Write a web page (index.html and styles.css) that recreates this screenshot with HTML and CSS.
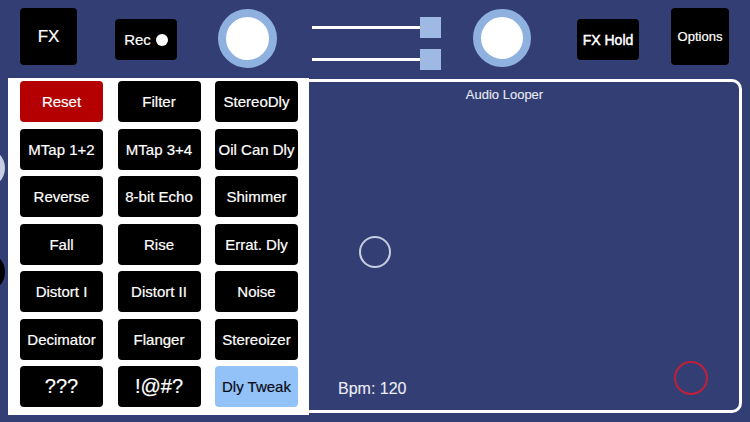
FILE: index.html
```html
<!DOCTYPE html>
<html>
<head>
<meta charset="utf-8">
<link rel="stylesheet" href="styles.css">
</head>
<body>
<div class="edge edge-light"></div>
<div class="edge edge-dark"></div>
<div class="topbar">
  <div class="tbtn fx">FX</div>
  <div class="tbtn rec">Rec <span class="dot"></span></div>
  <div class="knob k1"></div>
  <div class="sliders">
    <div class="srow"><div class="line"></div><div class="thumb"></div></div>
    <div class="srow"><div class="line"></div><div class="thumb"></div></div>
  </div>
  <div class="knob k2"></div>
  <div class="tbtn fxhold">FX Hold</div>
  <div class="tbtn options">Options</div>
</div>
<div class="main">
  <div class="panel">
    <div class="btn red">Reset</div>
    <div class="btn">Filter</div>
    <div class="btn">StereoDly</div>
    <div class="btn">MTap 1+2</div>
    <div class="btn">MTap 3+4</div>
    <div class="btn">Oil Can Dly</div>
    <div class="btn">Reverse</div>
    <div class="btn">8-bit Echo</div>
    <div class="btn">Shimmer</div>
    <div class="btn">Fall</div>
    <div class="btn">Rise</div>
    <div class="btn">Errat. Dly</div>
    <div class="btn">Distort I</div>
    <div class="btn">Distort II</div>
    <div class="btn">Noise</div>
    <div class="btn">Decimator</div>
    <div class="btn">Flanger</div>
    <div class="btn">Stereoizer</div>
    <div class="btn big">???</div>
    <div class="btn big">!@#?</div>
    <div class="btn blue">Dly Tweak</div>
  </div>
  <div class="looper">
    <div class="title">Audio Looper</div>
    <div class="bpm">Bpm: 120</div>
    <div class="ring ring-gray"></div>
    <div class="ring ring-red"></div>
  </div>
</div>
</body>
</html>
```
FILE: styles.css
```css
html, body {
  margin: 0;
  padding: 0;
}
body {
  width: 750px;
  height: 422px;
  overflow: hidden;
  background: #333f74;
  font-family: "Liberation Sans", Arial, sans-serif;
  color: #fff;
  position: relative;
  -webkit-text-stroke: 0.2px currentColor;
}
.edge {
  position: absolute;
  left: -35px;
  width: 40px;
  height: 40px;
  border-radius: 50%;
}
.edge-light { top: 148px; background: #c9cfe3; }
.edge-dark { top: 252px; background: #000; }

.topbar {
  height: 78px;
  display: flex;
  align-items: flex-start;
  padding-left: 20px;
}
.tbtn {
  background: #000;
  border-radius: 4px;
  display: flex;
  align-items: center;
  justify-content: center;
  color: #fff;
}
.fx {
  width: 57px;
  height: 57px;
  margin-top: 8px;
  font-size: 17px;
}
.rec {
  width: 62px;
  height: 41px;
  margin-top: 19px;
  margin-left: 38px;
  font-size: 15px;
  gap: 5px;
}
.dot {
  width: 12px;
  height: 12px;
  border-radius: 50%;
  background: #fff;
}
.knob {
  box-sizing: border-box;
  width: 59px;
  height: 59px;
  border-radius: 50%;
  border: 8px solid #8fb1e0;
  background: #fff;
  margin-top: 9px;
}
.k1 { margin-left: 41px; }
.k2 { margin-left: 32px; width: 58px; height: 58px; }
.sliders {
  width: 129px;
  margin-left: 35px;
  margin-top: 17px;
  display: flex;
  flex-direction: column;
  gap: 11px;
}
.srow {
  display: flex;
  align-items: center;
  height: 21px;
}
.line {
  flex: 1;
  height: 2.5px;
  background: #fff;
}
.thumb {
  width: 21px;
  height: 21px;
  background: #9db9e4;
}
.fxhold {
  width: 62px;
  height: 41px;
  margin-top: 19px;
  margin-left: 46px;
  font-size: 14px;
  -webkit-text-stroke: 0.45px currentColor;
}
.options {
  width: 58px;
  height: 57px;
  margin-top: 8px;
  margin-left: 32px;
  font-size: 13px;
}

.main {
  display: flex;
  align-items: flex-start;
  padding-left: 8px;
}
.panel {
  box-sizing: border-box;
  width: 301px;
  height: 337px;
  background: #fff;
  padding: 3px 11px 8px 12px;
  display: grid;
  grid-template-columns: 83px 83px 83px;
  grid-auto-rows: 41px;
  column-gap: 14.5px;
  row-gap: 6.5px;
  position: relative;
  z-index: 1;
}
.btn {
  background: #000;
  border-radius: 4px;
  color: #fff;
  font-size: 15px;
  display: flex;
  align-items: center;
  justify-content: center;
  white-space: nowrap;
}
.btn.big { font-size: 20px; }
.btn.red { background: #b40000; }
.btn.blue { background: #92c2f8; color: #0a0a14; }

.looper {
  box-sizing: border-box;
  width: 433px;
  height: 334px;
  margin-top: 1px;
  border: 3.5px solid #fff;
  border-left: none;
  border-radius: 0 10px 10px 0;
  position: relative;
  display: flex;
  flex-direction: column;
  justify-content: space-between;
  -webkit-text-stroke: 0.1px currentColor;
}
.title {
  font-size: 13px;
  line-height: 15px;
  color: #e8eaf2;
  text-align: center;
  padding-top: 5px;
  padding-right: 39px;
}
.bpm {
  font-size: 16px;
  line-height: 18px;
  color: #eceef5;
  padding-left: 29px;
  margin-bottom: 12px;
}
.ring {
  position: absolute;
  box-sizing: border-box;
  border-radius: 50%;
}
.ring-gray {
  left: 50px;
  top: 154px;
  width: 32px;
  height: 32px;
  border: 2.5px solid #c9cde0;
}
.ring-red {
  left: 365px;
  top: 279px;
  width: 34px;
  height: 34px;
  border: 2.5px solid #c21f3a;
}
```
